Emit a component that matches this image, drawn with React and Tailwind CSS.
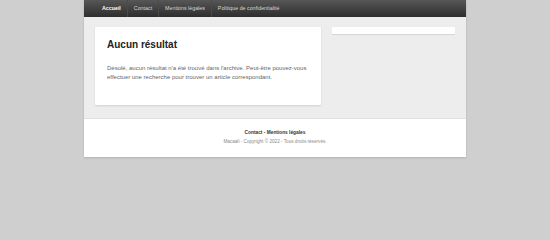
import React from 'react';

const navItems = ['Accueil', 'Contact', 'Mentions légales', 'Politique de confidentialité'];

const App = () => {
  return (
    <div className="min-h-[240px] w-full bg-[#cfcfcf] font-['Liberation_Sans',Arial,sans-serif]">
      <div className="mx-auto w-[382px] shadow-[0_1px_2px_rgba(0,0,0,0.15)]">
        {/* top menu */}
        <nav className="flex h-[17px] items-center bg-gradient-to-b from-[#575757] to-[#2e2e2e] pl-[12px]">
          {navItems.map((item, i) => (
            <a
              key={item}
              className={`flex h-full items-center px-[6px] text-[5.3px] ${
                i === 0 ? 'font-bold text-white' : 'border-l border-[#4a4a4a] text-[#d8d8d8]'
              }`}
            >
              {item}
            </a>
          ))}
        </nav>

        {/* content */}
        <div className="flex gap-[11px] bg-[#ededed] px-[11px] pt-[10px] pb-[13px]">
          <main className="h-[78px] w-[226px] rounded-[1px] bg-white px-[12px] pt-[10px] shadow-[0_1px_2px_rgba(0,0,0,0.12)]">
            <h1 className="text-[10px] font-bold text-[#222]">Aucun résultat</h1>
            <p className="mt-[12px] text-[6px] leading-[9.3px] text-[#666]">
              Désolé, aucun résultat n'a été trouvé dans l'archive. Peut-être pouvez-vous effectuer une recherche pour trouver un article correspondant.
            </p>
          </main>
          <aside className="flex-1">
            <div className="h-[7px] rounded-[1px] bg-white shadow-[0_1px_1px_rgba(0,0,0,0.1)]" />
          </aside>
        </div>

        {/* footer */}
        <footer className="h-[39px] border-t border-[#e0e0e0] bg-white pt-[10px] text-center">
          <p className="text-[4.8px] font-bold text-[#333]">Contact - Mentions légales</p>
          <p className="mt-[3px] text-[4.65px] text-[#888]">Macaali - Copyright © 2022 - Tous droits réservés.</p>
        </footer>
      </div>
    </div>
  );
};

export default App;
